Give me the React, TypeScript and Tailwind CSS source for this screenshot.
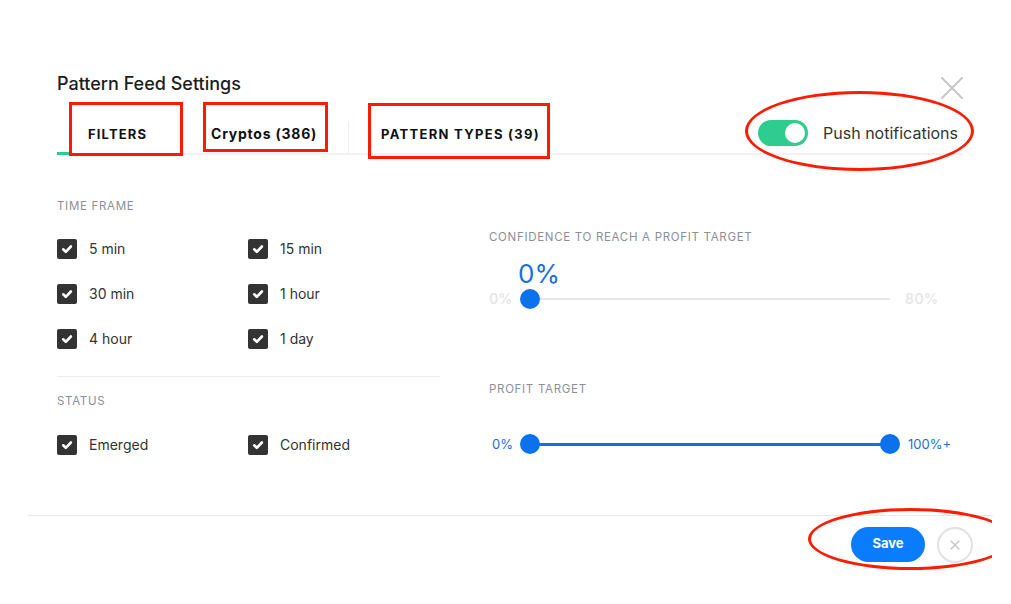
import { X } from "lucide-react";

const timeFrames = [
  ["5 min", "15 min"],
  ["30 min", "1 hour"],
  ["4 hour", "1 day"]
];

function Check({ label }: { label: string }) {
  return (
    <div className="flex w-[191px] items-center gap-3">
      <span className="flex h-5 w-5 items-center justify-center rounded-[2px] bg-[#333]">
        <svg width="12" height="12" viewBox="0 0 12 12" fill="none">
          <path d="M2.2 6.3l2.6 2.5L9.9 3.5" stroke="#fff" strokeWidth="2.6" strokeLinecap="round" strokeLinejoin="round" />
        </svg>
      </span>
      <span className="text-[14px] leading-5 text-[#333]">{label}</span>
    </div>
  );
}

function SectionLabel({ children }: { children: string }) {
  return <div className="text-[11.5px] uppercase tracking-[0.06em] text-[#8a9099]">{children}</div>;
}

function Annotations() {
  return (
    <div className="pointer-events-none absolute inset-0 w-[992px] overflow-hidden">
      <div className="absolute left-[69px] top-[102px] h-[54px] w-[114px] border-[3.5px] border-[#ff1a00]" />
      <div className="absolute left-[203px] top-[102px] h-[50px] w-[125px] border-[3.5px] border-[#ff1a00]" />
      <div className="absolute left-[368px] top-[103px] h-[56px] w-[182px] border-[3.5px] border-[#ff1a00]" />
      <div className="absolute left-[745px] top-[91px] h-[80px] w-[229px] rounded-[50%] border-[3px] border-[#ff1a00]" />
      <div className="absolute left-[808px] top-[508px] h-[62px] w-[205px] rounded-[50%] border-[3px] border-[#ff1a00]" />
    </div>
  );
}

export default function App() {
  return (
    <div className="relative h-[604px] w-[1011px] overflow-hidden bg-white font-['Inter',sans-serif] text-[#222]">
      <div className="flex items-start justify-between pl-[57px] pr-[48px] pt-[73px]">
        <h1 className="text-[18px] font-medium leading-[22px] text-[#1d1d1d]">Pattern Feed Settings</h1>
        <svg className="mt-[4px]" width="22" height="22" viewBox="0 0 22 22" fill="none">
          <path d="M1 1l20 20M21 1L1 21" stroke="#c8c8c8" strokeWidth="2.2" strokeLinecap="round" />
        </svg>
      </div>

      <div className="mx-[57px] mt-[8px] flex h-[48px] w-[906px] items-end border-b-2 border-[#f2f2f2]">
        <div className="relative flex h-[40px] w-[136px] items-center pl-[31px] pt-[3px]">
          <span className="text-[13px] font-bold tracking-[0.09em] text-[#111]">FILTERS</span>
          <span className="absolute -bottom-[2px] left-0 h-[3px] w-[12px] bg-[#2ecc8f]" />
        </div>
        <div className="flex h-[40px] w-[155px] items-center pl-[18px]">
          <span className="text-[14px] font-bold tracking-[0.055em] text-[#111]">Cryptos (386)</span>
        </div>
        <div className="h-[32px] w-px bg-[#eee]" />
        <div className="flex h-[40px] items-center pl-[32px] pt-[3px]">
          <span className="text-[13px] font-bold tracking-[0.1em] text-[#111]">PATTERN TYPES (39)</span>
        </div>
        <div className="ml-auto flex h-[46px] items-center gap-[15px] pr-[5px] pt-[6px]">
          <span className="relative h-[26px] w-[50px] rounded-full bg-[#2ecc8f]">
            <span className="absolute right-[3px] top-[3px] h-5 w-5 rounded-full bg-white" />
          </span>
          <span className="text-[16px] text-[#333]">Push notifications</span>
        </div>
      </div>

      <div className="flex pl-[57px] pt-[43px]">
        <div className="w-[383px]">
          <SectionLabel>Time Frame</SectionLabel>
          <div className="mt-[24px] flex flex-col gap-[25px]">
            {timeFrames.map((row) => (
              <div key={row[0]} className="flex">
                {row.map((t) => (
                  <Check key={t} label={t} />
                ))}
              </div>
            ))}
          </div>
          <div className="mt-[27px] h-px bg-[#ececec]" />
          <div className="mt-[16px]">
            <SectionLabel>Status</SectionLabel>
          </div>
          <div className="mt-[24px] flex">
            <Check label="Emerged" />
            <Check label="Confirmed" />
          </div>
        </div>

        <div className="ml-[49px] pt-[31px]">
          <SectionLabel>Confidence to reach a profit target</SectionLabel>
          <div className="ml-[29px] mt-[14px] text-[26px] leading-[28px] text-[#1a6fd8]">0%</div>
          <div className="flex items-center">
            <span className="w-[41px] text-[14px] font-semibold text-[#e6e6e6]">0%</span>
            <div className="relative h-[2px] w-[360px] bg-[#e6e6e6]">
              <span className="absolute -left-[10px] -top-[9px] h-5 w-5 rounded-full bg-[#0b72ec]" />
            </div>
            <span className="ml-[15px] text-[14px] font-semibold tracking-[0.03em] text-[#e6e6e6]">80%</span>
          </div>

          <div className="mt-[72px]">
            <SectionLabel>Profit target</SectionLabel>
          </div>
          <div className="mt-[36px] flex items-center">
            <span className="w-[41px] pl-[3px] text-[13px] text-[#1a6fd8]">0%</span>
            <div className="relative h-[3px] w-[360px] bg-[#0b72ec]">
              <span className="absolute -left-[10px] -top-[9px] h-5 w-5 rounded-full bg-[#0b72ec]" />
              <span className="absolute -right-[10px] -top-[9px] h-5 w-5 rounded-full bg-[#0b72ec]" />
            </div>
            <span className="ml-[18px] text-[13px] text-[#1a6fd8]">100%+</span>
          </div>
        </div>
      </div>

      <div className="ml-[28px] mt-[60px] h-px w-[965px] bg-[#e8e8e8]" />
      <div className="flex justify-end gap-[12px] pr-[38px] pt-[11px]">
        <button className="h-[35px] w-[74px] rounded-full bg-[#0a7cff] text-[13px] font-bold text-white">Save</button>
        <button className="flex h-[36px] w-[36px] items-center justify-center rounded-full border-2 border-[#e2e2e2]">
          <X size={16} strokeWidth={2.2} className="text-[#c8c8c8]" />
        </button>
      </div>

      <Annotations />
    </div>
  );
}
